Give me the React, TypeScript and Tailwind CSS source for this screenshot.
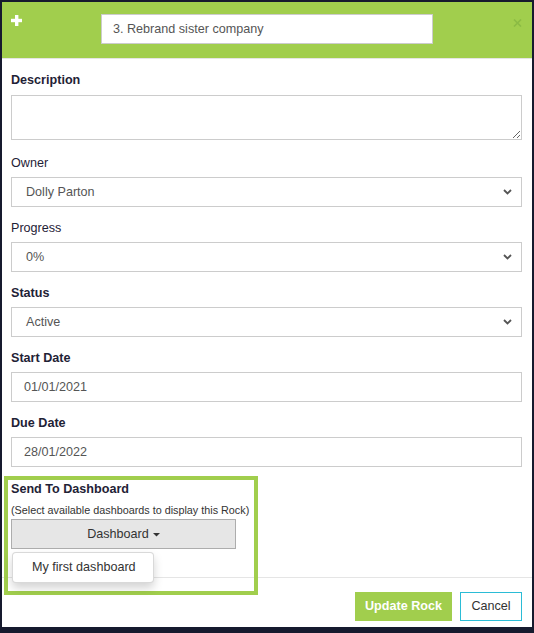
import React from "react";

const Chevron = () => (
  <svg width="9" height="6" viewBox="0 0 9 6" className="pointer-events-none absolute right-[9px] top-1/2 -translate-y-1/2">
    <path d="M1 1 L4.5 4.5 L8 1" fill="none" stroke="#555" strokeWidth="1.8" />
  </svg>
);

const labelCls = "text-[12.6px] leading-[16px] mb-[6px] text-[#1f2236]";

function SelectField({ label, value, bold, first }: { label: string; value: string; bold?: boolean; first?: boolean }) {
  return (
    <div className={first ? "mt-[15px]" : "mt-[13px]"}>
      <div className={`${labelCls} ${bold ? "font-bold" : ""}`}>{label}</div>
      <div className="relative h-[30px] border border-[#cccccc] bg-white flex items-center pl-[14px] text-[12.6px] text-[#555]">
        {value}
        <Chevron />
      </div>
    </div>
  );
}

function InputField({ label, value, bold }: { label: string; value: string; bold?: boolean }) {
  return (
    <div className="mt-[13px]">
      <div className={`${labelCls} ${bold ? "font-bold" : ""}`}>{label}</div>
      <div className="h-[30px] border border-[#cccccc] bg-white flex items-center pl-[12px] text-[12.6px] text-[#555]">{value}</div>
    </div>
  );
}

export default function App() {
  return (
    <div className="w-[534px] h-[633px] bg-[#161a2e] pt-[2px] px-[2px] pb-[6px] font-['Liberation_Sans',Arial,sans-serif]">
      <div className="relative bg-white h-full flex flex-col overflow-hidden">
        {/* header */}
        <div className="h-[57px] shrink-0 bg-[#a1ce4d] border-b border-[#e5e5e5] flex items-start pl-[9px] pr-[10px] pt-[12px]">
          <svg width="11" height="11" viewBox="0 0 11 11" className="mt-[1px]">
            <rect x="4" y="0" width="3.4" height="11" fill="#fff" />
            <rect x="0" y="3.8" width="11" height="3.4" fill="#fff" />
          </svg>
          <div className="ml-[79px] w-[332px] h-[30px] bg-white border border-[#cccccc] flex items-center pl-[11px] text-[12.6px] text-[#555]">
            3. Rebrand sister company
          </div>
          <svg width="9" height="8" viewBox="0 0 9 8" className="ml-auto mt-[5px]">
            <path d="M1 0.5 L8 7.5 M8 0.5 L1 7.5" stroke="#8bbb44" strokeWidth="1.6" />
          </svg>
        </div>

        {/* body */}
        <div className="flex-1 pl-[9px] pr-[10px] pt-[14px]">
          <div>
            <div className="text-[12.6px] leading-[16px] mb-[6px] -mt-[1px] pb-[1px] text-[#1f2236] font-bold">Description</div>
            <textarea className="block w-full h-[45px] border border-[#cccccc] outline-none resize-y" />
          </div>
          <SelectField label="Owner" value="Dolly Parton" first />
          <SelectField label="Progress" value="0%" />
          <SelectField label="Status" value="Active" bold />
          <InputField label="Start Date" value="01/01/2021" bold />
          <InputField label="Due Date" value="28/01/2022" bold />

          <div className="mt-[13px]">
            <div className="text-[12.6px] leading-[18px] mt-[1px] text-[#1f2236] font-bold">Send To Dashboard</div>
            <div className="text-[10.8px] leading-[16px] mt-[4px] text-[#333]">(Select available dashboards to display this Rock)</div>
            <div className="relative w-[225px] mt-[1px]">
              <div className="h-[30px] bg-[#e6e6e6] border border-[#adadad] flex items-center justify-center text-[12.6px] text-[#333]">
                Dashboard
                <svg width="7" height="4" viewBox="0 0 7 4" className="ml-[4px] mt-[1px]">
                  <path d="M0 0 L7 0 L3.5 3.5 Z" fill="#333" />
                </svg>
              </div>
              <div className="absolute left-[1px] top-full mt-[3px] w-[142px] h-[31px] bg-white border border-[rgba(0,0,0,0.15)] rounded-[4px] shadow-[0_5px_10px_rgba(0,0,0,0.175)] flex items-center pl-[19px] text-[12.6px] text-[#333] z-10">
                My first dashboard
              </div>
            </div>
          </div>
        </div>

        {/* footer */}
        <div className="h-[50px] shrink-0 border-t border-[#e5e5e5] flex justify-end items-start pt-[14px] pr-[10px] gap-[8px]">
          <div className="w-[97px] h-[29px] bg-[#a1ce4d] text-white font-bold text-[12.6px] flex items-center justify-center">Update Rock</div>
          <div className="w-[62px] h-[29px] bg-white border border-[#2bbcd6] text-[#333] text-[12.6px] flex items-center justify-center">Cancel</div>
        </div>

        {/* highlight overlay */}
        <div className="absolute left-[2px] top-[474px] w-[254px] h-[119px] border-4 border-[#a1ce4d] pointer-events-none" />
      </div>
    </div>
  );
}
